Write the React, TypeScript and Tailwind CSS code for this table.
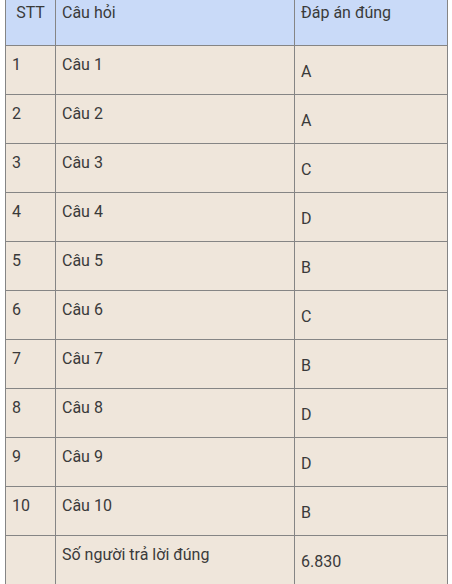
const rows = [
  { stt: "1", q: "Câu 1", a: "A" },
  { stt: "2", q: "Câu 2", a: "A" },
  { stt: "3", q: "Câu 3", a: "C" },
  { stt: "4", q: "Câu 4", a: "D" },
  { stt: "5", q: "Câu 5", a: "B" },
  { stt: "6", q: "Câu 6", a: "C" },
  { stt: "7", q: "Câu 7", a: "B" },
  { stt: "8", q: "Câu 8", a: "D" },
  { stt: "9", q: "Câu 9", a: "D" },
  { stt: "10", q: "Câu 10", a: "B" },
  { stt: "", q: "Số người trả lời đúng", a: "6.830" },
];

const cell = "border border-[#858585] align-top px-[6px] pt-[8px]";

export default function App() {
  return (
    <div className="h-[584px] overflow-hidden bg-white font-['Roboto',sans-serif] text-[16px] leading-[22px] text-[#3a3a3a]">
      <table className="ml-[5px] -mt-[7px] w-[442px] table-fixed border-collapse">
        <colgroup>
          <col className="w-[50px]" />
          <col className="w-[239px]" />
          <col className="w-[153px]" />
        </colgroup>
        <thead>
          <tr className="h-[52px] bg-[#c9daf8]">
            <th className={`${cell} text-center font-normal`}>STT</th>
            <th className={`${cell} text-left font-normal`}>Câu hỏi</th>
            <th className={`${cell} text-left font-normal`}>Đáp án đúng</th>
          </tr>
        </thead>
        <tbody>
          {rows.map((r, i) => (
            <tr key={i} className="h-[49px] bg-[#efe6db]">
              <td className={cell}>{r.stt}</td>
              <td className={cell}>{r.q}</td>
              <td className={`${cell} pt-[15px]`}>{r.a}</td>
            </tr>
          ))}
        </tbody>
      </table>
    </div>
  );
}
